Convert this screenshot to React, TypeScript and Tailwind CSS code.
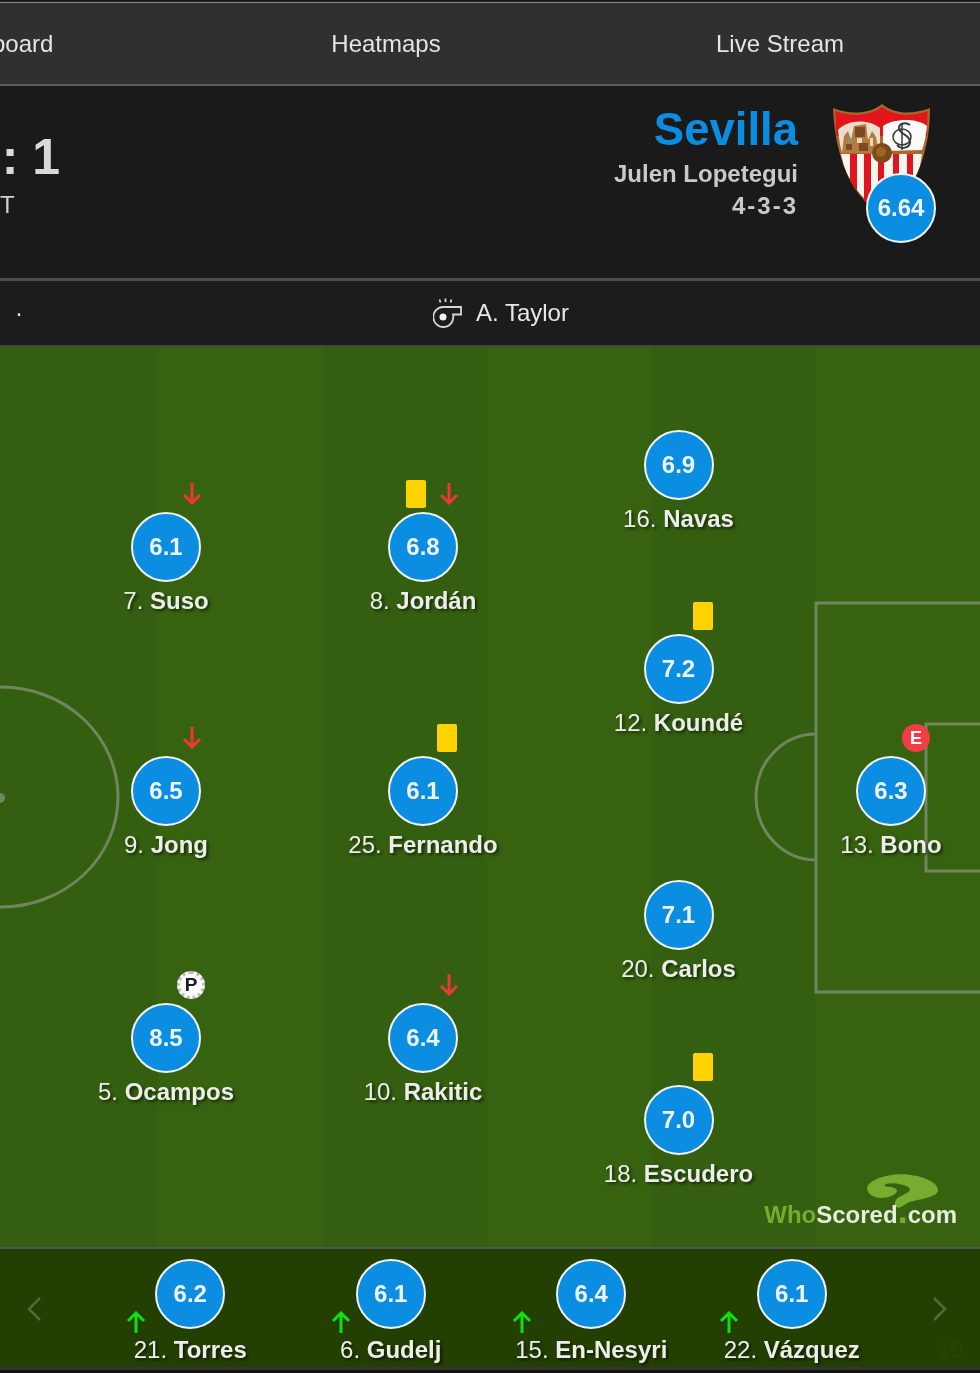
import type { ReactNode } from "react";

interface PlayerData {
  x: number;
  y: number;
  rating: string;
  num: string;
  name: string;
  card?: boolean;
  subOff?: boolean;
  goal?: "P" | "E";
}

const players: PlayerData[] = [
  { x: 166, y: 200, rating: "6.1", num: "7.", name: "Suso", subOff: true },
  { x: 423, y: 200, rating: "6.8", num: "8.", name: "Jordán", card: true, subOff: true },
  { x: 678.5, y: 118, rating: "6.9", num: "16.", name: "Navas" },
  { x: 678.5, y: 322, rating: "7.2", num: "12.", name: "Koundé", card: true },
  { x: 166, y: 444, rating: "6.5", num: "9.", name: "Jong", subOff: true },
  { x: 423, y: 444, rating: "6.1", num: "25.", name: "Fernando", card: true },
  { x: 678.5, y: 568, rating: "7.1", num: "20.", name: "Carlos" },
  { x: 891, y: 444, rating: "6.3", num: "13.", name: "Bono", goal: "E" },
  { x: 166, y: 691, rating: "8.5", num: "5.", name: "Ocampos", goal: "P" },
  { x: 423, y: 691, rating: "6.4", num: "10.", name: "Rakitic", subOff: true },
  { x: 678.5, y: 773, rating: "7.0", num: "18.", name: "Escudero", card: true },
];

const subs = [
  { rating: "6.2", num: "21.", name: "Torres", arrow: -54 },
  { rating: "6.1", num: "6.", name: "Gudelj", arrow: -50 },
  { rating: "6.4", num: "15.", name: "En-Nesyri", arrow: -69 },
  { rating: "6.1", num: "22.", name: "Vázquez", arrow: -63 },
];

function Rating({ value, children }: { value: string; children?: ReactNode }) {
  return (
    <div className="relative flex h-[70px] w-[70px] shrink-0 items-center justify-center rounded-full border-2 border-[#f1f4f6] bg-[#0b8de2] text-[24px] font-bold text-[#eef3f6]">
      {value}
      {children}
    </div>
  );
}

function Arrow({ up }: { up?: boolean }) {
  return (
    <svg width="20" height="23" viewBox="0 0 20 23" fill="none" stroke={up ? "#0fe00f" : "#f0363c"} strokeWidth="3">
      {up ? <path d="M10 22V2M2 10l8-8 8 8" /> : <path d="M10 1v20M2 13l8 8 8-8" />}
    </svg>
  );
}

function Name({ num, name }: { num: string; name: string }) {
  return (
    <div className="whitespace-nowrap text-[24px] leading-[28px] text-[#eceeea] [text-shadow:2px_2px_3px_rgba(0,0,0,0.55)]">
      {num} <span className="font-bold">{name}</span>
    </div>
  );
}

function Player({ p }: { p: PlayerData }) {
  return (
    <div className="absolute flex w-[240px] -translate-x-1/2 flex-col items-center" style={{ left: p.x, top: p.y - 35 }}>
      <Rating value={p.rating}>
        {p.card && (
          <div className={`absolute top-[-34px] h-[28px] w-[20px] rounded-[2px] bg-[#ffd200] ${p.subOff ? "left-[16px]" : "left-[47px]"}`} />
        )}
        {p.subOff && (
          <div className="absolute left-[49px] top-[-32px] flex">
            <Arrow />
          </div>
        )}
        {p.goal === "E" && (
          <div className="absolute left-[44px] top-[-34px] flex h-[28px] w-[28px] items-center justify-center rounded-full bg-[#f33d42] text-[18px] font-bold text-white">
            E
          </div>
        )}
        {p.goal === "P" && (
          <div className="absolute left-[44px] top-[-34px] flex h-[28px] w-[28px] items-center justify-center rounded-full border-[3px] border-dotted border-[#bdbdbd] bg-white text-[19px] font-bold text-[#1c1c28]">
            P
          </div>
        )}
      </Rating>
      <div className="mt-[5px]">
        <Name num={p.num} name={p.name} />
      </div>
    </div>
  );
}

function Whistle() {
  return (
    <svg width="30" height="30" viewBox="0 0 30 30" fill="none" stroke="#d6d6d6" strokeWidth="1.8">
      <path d="M6.5 1.5l1 3M12.5.5V4M18.5 1.5l-1 3" />
      <path d="M10 9H28V16.5H20A10 10 0 1 1 10 9Z" />
      <circle cx="10" cy="19" r="3.5" fill="#f2f2f2" stroke="none" />
    </svg>
  );
}

function Crest() {
  return (
    <svg width="100" height="114" viewBox="0 0 100 114">
      <defs>
        <clipPath id="shield">
          <path d="M1 4C18 11 38 10 50 0C62 10 80 11 98 4C98 25 95 42 89 60C81 84 66 100 50 113C34 100 19 84 11 60C5 42 2 25 1 4Z" />
        </clipPath>
      </defs>
      <g clipPath="url(#shield)">
        <rect width="100" height="114" fill="#a8692a" />
        <path d="M3.5 7C18 13 38 12 50 3C62 12 80 13 95.5 7L95 32H4Z" fill="#e2141c" />
        <path d="M6 26C14 16 36 14 48 24V49H10C8 42 7 34 6 26Z" fill="#eadfcd" />
        <path d="M51 22C60 15 84 13 95 22C94 30 93 38 90 46L51 47Z" fill="#fbfbfb" />
        <path d="M10 49L12 32L16 27L19 36L22 22L34 20L36 36L40 27L44 33L47 49Z" fill="#b57a3c" />
        <path d="M23 23h10v10h-10zM14 40h6v6h-6zM27 39h9v8h-9z" fill="#7b4a20" />
        <path d="M25 34h5v5h-5zM38 34h3v8h-3z" fill="#e8d6b6" />
        <path d="M16 34h3v5h-3z" fill="#6a9a90" />
        <path d="M9 50H90L88 62C80 84 66 98 50 110C34 98 20 84 12 62Z" fill="#f8f5f0" />
        <path d="M18 50h7v44h-7zM32 50h7v55h-7zM46 50h6v60h-6zM61 50h6v42h-6zM75 50h6v28h-6z" fill="#e2141c" />
      </g>
      <g fill="none" stroke="#3a3a3a">
        <path d="M78 21c-4-3-11-2-11 3 0 7 11 6 11 14 0 6-9 8-13 3" strokeWidth="2" />
        <ellipse cx="70" cy="33" rx="9" ry="8" strokeWidth="1.5" />
        <path d="M70 19v27" strokeWidth="1.5" />
      </g>
      <circle cx="50" cy="49" r="10" fill="#7a4a18" />
      <circle cx="49" cy="48" r="5" fill="#9c6426" />
    </svg>
  );
}

function Logo() {
  return (
    <div className="absolute bottom-[18px] right-[23px] flex flex-col items-end">
      <svg width="74" height="36" viewBox="0 0 74 36" className="mb-[-8px] mr-[17px]">
        <path
          d="M1.3 14C3 8 18 1.3 35 1.3C52 1.3 72 8 72 17.3C72 24 55 26 44 29C38 31 36 35 32 34.7C28 34 28 30 30 27C33 22 44 21 44 16C42 12 28 9 20 11C18 12 18 13 20 13.5C26 14 31 15 31 18C30 22 22 25 15 25C7 25 0 20 1.3 14Z"
          fill="#76ac2f"
        />
      </svg>
      <div className="whitespace-nowrap text-[24px] font-bold leading-[28px] text-[#e8ecdf]">
        <span className="text-[#76ac2f]">Who</span>Scored<span className="text-[36px] leading-[0] text-[#76ac2f]">.</span>com
      </div>
    </div>
  );
}

export default function App() {
  return (
    <div className="h-[1373px] w-[980px] overflow-hidden bg-[#161616] font-['Liberation_Sans',Arial,sans-serif] blur-[0.5px]">
      <div className="h-[2px] bg-[#1c1c1c]" />
      <div className="h-[84px] border-t border-b-2 border-t-[#8a8a8a] border-b-[#5c5c5c] bg-[#303030]">
        <div className="ml-[-205px] grid h-full w-[1182px] grid-cols-3 items-center text-center text-[24px] text-[#e4e4e4]">
          <div>Chalkboard</div>
          <div>Heatmaps</div>
          <div>Live Stream</div>
        </div>
      </div>

      <div className="flex h-[192px] justify-between bg-[#1a1a1a]">
        <div className="ml-[-40px] w-[100px] pt-[38px] text-center">
          <div className="whitespace-nowrap text-[50px] font-bold leading-[66px] text-[#d8dbd5]">1 : 1</div>
          <div className="ml-[-20px] pt-[1px] text-[24px] leading-[28px] text-[#cfcfcf]">FT</div>
        </div>
        <div className="flex pr-[48px]">
          <div className="mr-[34px] pt-[16px] text-right font-bold text-[#c9c9c9]">
            <div className="text-[45.5px] leading-[55px] text-[#0b8de2]">Sevilla</div>
            <div className="mt-[1px] text-[24px] leading-[32px]">Julen Lopetegui</div>
            <div className="text-[24px] leading-[32px] tracking-[2px]">4-3-3</div>
          </div>
          <div className="relative pt-[18px]">
            <Crest />
            <div className="absolute left-[34px] top-[87px]">
              <Rating value="6.64" />
            </div>
          </div>
        </div>
      </div>

      <div className="flex h-[69px] items-center border-t-[3px] border-b-2 border-t-[#4e4e4e] border-b-[#454545] bg-[#1c1c1c] pl-[15px] text-[24px] text-[#e6e6e6]">
        <span className="w-[418px] leading-none">·</span>
        <Whistle />
        <span className="ml-[13px]">A. Taylor</span>
      </div>

      <div className="relative h-[900px] overflow-hidden">
        <div className="grid h-full grid-cols-[158px_165px_164px_165px_164px_164px]">
          <div className="bg-[#345e10]" />
          <div className="bg-[#376210]" />
          <div className="bg-[#345e10]" />
          <div className="bg-[#376210]" />
          <div className="bg-[#345e10]" />
          <div className="bg-[#376210]" />
        </div>
        <svg className="absolute inset-0" width="980" height="900" fill="none" stroke="#71865f" strokeWidth="3">
          <ellipse cx="1" cy="450" rx="117" ry="110" />
          <circle cx="0" cy="451" r="5" fill="#71865f" stroke="none" />
          <rect x="816" y="256" width="180" height="389" />
          <rect x="926" y="377" width="70" height="147" />
          <path d="M816 387A60 63 0 0 0 816 513" />
        </svg>
        {players.map((p) => (
          <Player key={p.name} p={p} />
        ))}
        <Logo />
      </div>

      <div className="relative flex h-[123px] border-t-2 border-b-[3px] border-t-[#555] border-b-[#333] bg-[#243f02] pl-[90px] pt-[10px]">
        <svg className="absolute left-[26px] top-[47px]" width="16" height="26" viewBox="0 0 16 26" fill="none" stroke="#4f6d35" strokeWidth="2.5">
          <path d="M14 2L3 13l11 11" />
        </svg>
        {subs.map((s) => (
          <div key={s.name} className="relative flex w-[200.5px] flex-col items-center">
            <Rating value={s.rating} />
            <div className="mt-[7px]">
              <Name num={s.num} name={s.name} />
            </div>
            <div className="absolute top-[52px] left-1/2 flex" style={{ marginLeft: s.arrow - 10 }}>
              <Arrow up />
            </div>
          </div>
        ))}
        <svg className="absolute left-[932px] top-[47px]" width="16" height="26" viewBox="0 0 16 26" fill="none" stroke="#4f6d35" strokeWidth="2.5">
          <path d="M2 2l11 11L2 24" />
        </svg>
        <div className="absolute left-[937px] top-[87px] text-[24px] leading-[28px] text-[#2a4406]">19</div>
      </div>
    </div>
  );
}
